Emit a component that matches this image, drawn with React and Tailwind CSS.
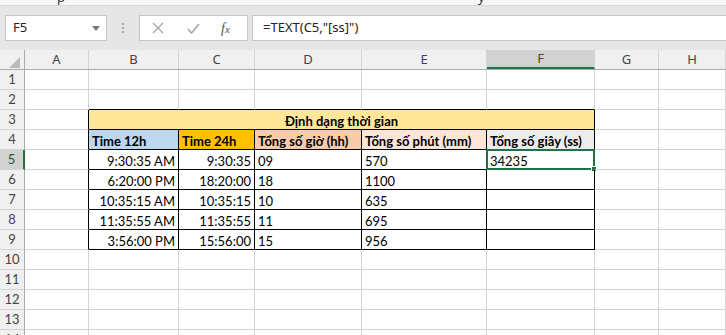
import React from 'react'

const COLS = [
  { key: '', w: 25 },
  { key: 'A', w: 64 },
  { key: 'B', w: 90 },
  { key: 'C', w: 76 },
  { key: 'D', w: 107 },
  { key: 'E', w: 125 },
  { key: 'F', w: 108 },
  { key: 'G', w: 64 },
  { key: 'H', w: 0 },
]

const HEAD = [
  { text: 'Time 12h', bg: 'bg-[#bdd7ee]' },
  { text: 'Time 24h', bg: 'bg-[#ffc000]' },
  { text: 'Tổng số giờ (hh)', bg: 'bg-[#f8cbad]' },
  { text: 'Tổng số phút (mm)', bg: 'bg-[#fce4d6]' },
  { text: 'Tổng số giây (ss)', bg: 'bg-[#ededed]' },
]

const DATA = [
  ['9:30:35 AM', '9:30:35', '09', '570', '34235'],
  ['6:20:00 PM', '18:20:00', '18', '1100', ''],
  ['10:35:15 AM', '10:35:15', '10', '635', ''],
  ['11:35:55 AM', '11:35:55', '11', '695', ''],
  ['3:56:00 PM', '15:56:00', '15', '956', ''],
]

const inTable = (r, c) => r >= 3 && r <= 9 && c >= 1 && c <= 5

function Cell({ r, c, children, align = 'left', className = '' }) {
  const w = COLS[c + 1].w
  const right = inTable(r, c) || inTable(r, c + 1) ? 'border-r-black' : 'border-r-[#d4d4d4]'
  const bottom = inTable(r, c) || inTable(r + 1, c) ? 'border-b-black' : 'border-b-[#d4d4d4]'
  return (
    <div
      className={`relative flex h-5 shrink-0 items-end border-r border-b px-[3px] pb-[1px] leading-none whitespace-nowrap ${right} ${bottom} ${
        align === 'right' ? 'justify-end' : 'justify-start'
      } ${w ? '' : 'flex-1'} ${className}`}
      style={w ? { width: w } : undefined}
    >
      {children}
    </div>
  )
}

function RowHead({ n, active }) {
  return (
    <div
      className={`flex h-5 w-[25px] shrink-0 items-center justify-center border-b border-b-[#d4d4d4] text-[13px] ${
        active
          ? 'border-r-2 border-r-[#217346] bg-[#d2d2d2] text-[#1e5a3a]'
          : 'border-r border-r-[#ababab] bg-[#f0f0f0] text-[#444]'
      }`}
    >
      {n}
    </div>
  )
}

function SheetRow({ r }) {
  const cells = []
  if (r === 3) {
    cells.push(<Cell key="a" r={r} c={0} />)
    cells.push(
      <div
        key="m"
        className="flex h-5 w-[506px] shrink-0 items-end justify-center border-r border-b border-black bg-[#ffe699] pb-[1px] font-bold leading-none"
      >
        Định dạng thời gian
      </div>
    )
    cells.push(<Cell key="g" r={r} c={6} />)
    cells.push(<Cell key="h" r={r} c={7} />)
  } else {
    for (let c = 0; c < 8; c++) {
      let content = null
      let align = 'left'
      let cls = ''
      if (r === 4 && c >= 1 && c <= 5) {
        content = HEAD[c - 1].text
        cls = `${HEAD[c - 1].bg} font-bold`
      } else if (r >= 5 && r <= 9 && c >= 1 && c <= 5) {
        content = DATA[r - 5][c - 1]
        if (c <= 2) align = 'right'
      }
      cells.push(
        <Cell key={c} r={r} c={c} align={align} className={cls}>
          {content}
          {r === 5 && c === 5 && (
            <>
              <div className="pointer-events-none absolute -inset-[1px] border-2 border-[#217346]" />
              <div className="absolute -right-[3px] -bottom-[3px] h-[6px] w-[6px] border border-white bg-[#217346]" />
            </>
          )}
        </Cell>
      )
    }
  }
  return (
    <div className="flex">
      <RowHead n={r} active={r === 5} />
      {cells}
    </div>
  )
}

export default function App() {
  const rows = Array.from({ length: 14 }, (_, i) => i + 1)
  return (
    <div
      className="h-[335px] w-[726px] overflow-hidden bg-white"
      style={{ fontFamily: 'Lato, "Noto Sans", sans-serif' }}
    >
      {/* cut-off ribbon text */}
      <div className="relative h-[5px] overflow-hidden bg-[#f7f7f7] text-[13px] text-[#333]">
        <span className="absolute top-[-12px] left-[57px]" style={{ fontFamily: '"Noto Sans", sans-serif' }}>p</span>
        <span className="absolute top-[-12px] left-[478px]" style={{ fontFamily: '"Noto Sans", sans-serif' }}>y</span>
      </div>

      {/* formula bar */}
      <div
        className="flex h-[45px] items-start border-t border-[#dadada] bg-[#e6e6e6] pt-[9px]"
        style={{ fontFamily: '"Noto Sans", "Open Sans", sans-serif' }}
      >
        <div className="ml-[5px] flex h-[26px] w-[102px] items-center justify-between border border-[#c6c6c6] bg-white pr-[6px] pl-[7px] text-[13px] text-[#222]">
          <span>F5</span>
          <svg width="8" height="5" viewBox="0 0 8 5">
            <path d="M0 0 L8 0 L4 5 Z" fill="#777" />
          </svg>
        </div>
        <div className="flex h-[26px] w-[32px] flex-col items-center justify-center gap-[2px]">
          <span className="h-[2px] w-[2px] bg-[#aaa]" />
          <span className="h-[2px] w-[2px] bg-[#aaa]" />
          <span className="h-[2px] w-[2px] bg-[#aaa]" />
        </div>
        <div className="flex h-[26px] w-[109px] items-center border border-[#c6c6c6] bg-white">
          <svg className="ml-[12px]" width="12" height="12" viewBox="0 0 12 12">
            <path d="M1 1 L11 11 M11 1 L1 11" stroke="#a6a6a6" strokeWidth="1.3" fill="none" />
          </svg>
          <svg className="ml-[23px]" width="13" height="11" viewBox="0 0 13 11">
            <path d="M1 6 L4.5 10 L12 1" stroke="#a6a6a6" strokeWidth="1.6" fill="none" />
          </svg>
          <span className="ml-[21px] text-[14px] text-[#555] italic" style={{ fontFamily: '"Liberation Serif", serif' }}>
            f<span className="text-[11px]">x</span>
          </span>
        </div>
        <div className="ml-[4px] flex h-[26px] flex-1 items-center border-y border-l border-[#c6c6c6] bg-white pl-[10px] text-[13px] text-[#222]">
          =TEXT(C5,"[ss]")
        </div>
      </div>

      {/* column headers */}
      <div className="flex h-5 border-b border-[#ababab] bg-[#f0f0f0] text-[13px] text-[#444]" style={{ fontFamily: '"Noto Sans", sans-serif' }}>
        {COLS.map((col, i) => {
          const active = col.key === 'F'
          return (
            <div
              key={i}
              className={`flex shrink-0 items-center justify-center border-r border-[#d4d4d4] ${i === 0 ? 'border-r-[#ababab]' : ''} ${
                active ? 'border-b-2 border-b-[#217346] bg-[#d2d2d2] text-[#1e5a3a]' : ''
              } ${col.w ? '' : 'flex-1'}`}
              style={col.w ? { width: col.w } : undefined}
            >
              {i === 0 ? (
                <svg className="mt-[5px] ml-[4px]" width="11" height="11" viewBox="0 0 11 11">
                  <path d="M11 0 L11 11 L0 11 Z" fill="#b9b9b9" />
                </svg>
              ) : (
                col.key
              )}
            </div>
          )
        })}
      </div>

      {/* grid */}
      <div className="text-[13px] text-black">
        {rows.map((r) => (
          <SheetRow key={r} r={r} />
        ))}
      </div>
    </div>
  )
}
